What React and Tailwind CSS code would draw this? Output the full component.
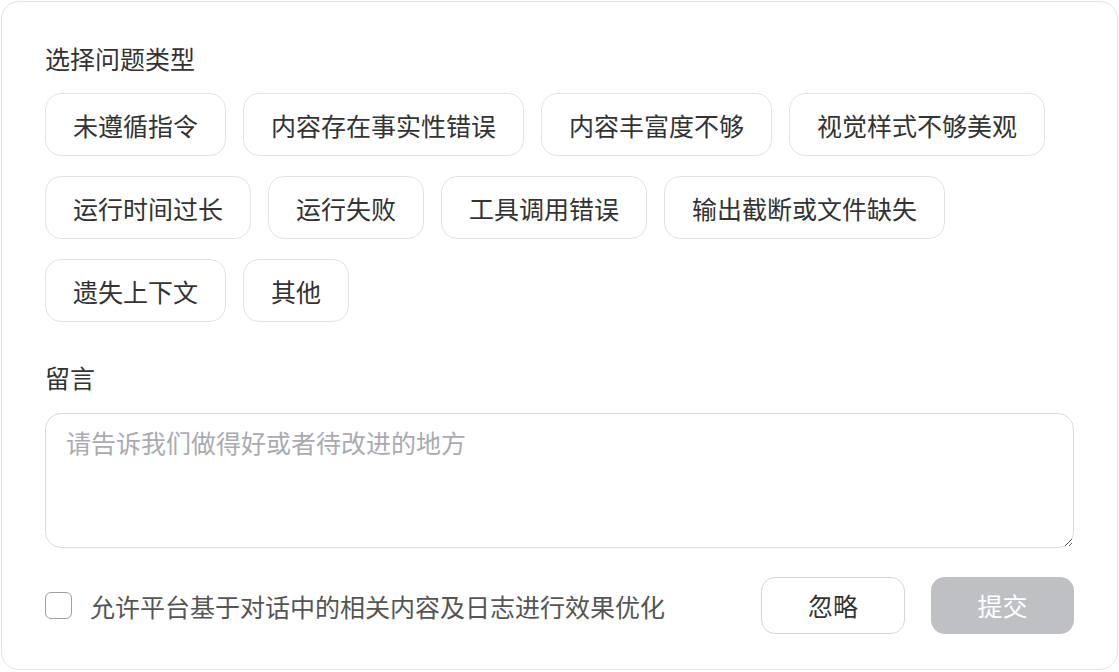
const issueRows = [
  ["未遵循指令", "内容存在事实性错误", "内容丰富度不够", "视觉样式不够美观"],
  ["运行时间过长", "运行失败", "工具调用错误", "输出截断或文件缺失"],
  ["遗失上下文", "其他"],
];

const Chip = ({ label }) => (
  <button className="h-[63px] rounded-[16px] border border-[#e3e3e3] bg-white px-[27px] text-[25px] leading-[30px] text-[#333]">
    {label}
  </button>
);

export default function App() {
  return (
    <div
      className="h-[672px] w-[1119px] bg-white p-px"
      style={{ fontFamily: '"Noto Sans CJK SC", "Noto Sans", sans-serif' }}
    >
      <div className="flex h-[669px] flex-col rounded-[18px] border border-[#e2e2e2] bg-white px-[43px] pt-[41px]">
        <div className="text-[25px] leading-[30px] text-[#333]">选择问题类型</div>

        <div className="mt-[20px] flex flex-col gap-y-[20px]">
          {issueRows.map((row, i) => (
            <div key={i} className="flex gap-x-[17px]">
              {row.map((label) => (
                <Chip key={label} label={label} />
              ))}
            </div>
          ))}
        </div>

        <div className="mt-[40px] text-[25px] leading-[30px] text-[#333]">留言</div>

        <textarea
          className="mt-[21px] h-[135px] w-full resize-y rounded-[16px] border border-[#dcdcdc] px-[20px] py-[13px] text-[25px] leading-[30px] text-[#333] outline-none placeholder:text-[#a9abb0]"
          placeholder="请告诉我们做得好或者待改进的地方"
        />

        <div className="mt-[29px] flex items-center">
          <label className="flex items-center gap-[18px]">
            <span className="h-[27px] w-[27px] rounded-[6px] border-[1.5px] border-[#a0a0a0] bg-white" />
            <span className="text-[25px] leading-[30px] text-[#555]">
              允许平台基于对话中的相关内容及日志进行效果优化
            </span>
          </label>
          <div className="ml-auto flex gap-[26px]">
            <button className="h-[57px] w-[144px] rounded-[14px] border border-[#d6d6d6] bg-white text-[25px] text-[#333]">
              忽略
            </button>
            <button className="h-[57px] w-[143px] rounded-[14px] bg-[#bec0c4] text-[25px] text-white">
              提交
            </button>
          </div>
        </div>
      </div>
    </div>
  );
}
